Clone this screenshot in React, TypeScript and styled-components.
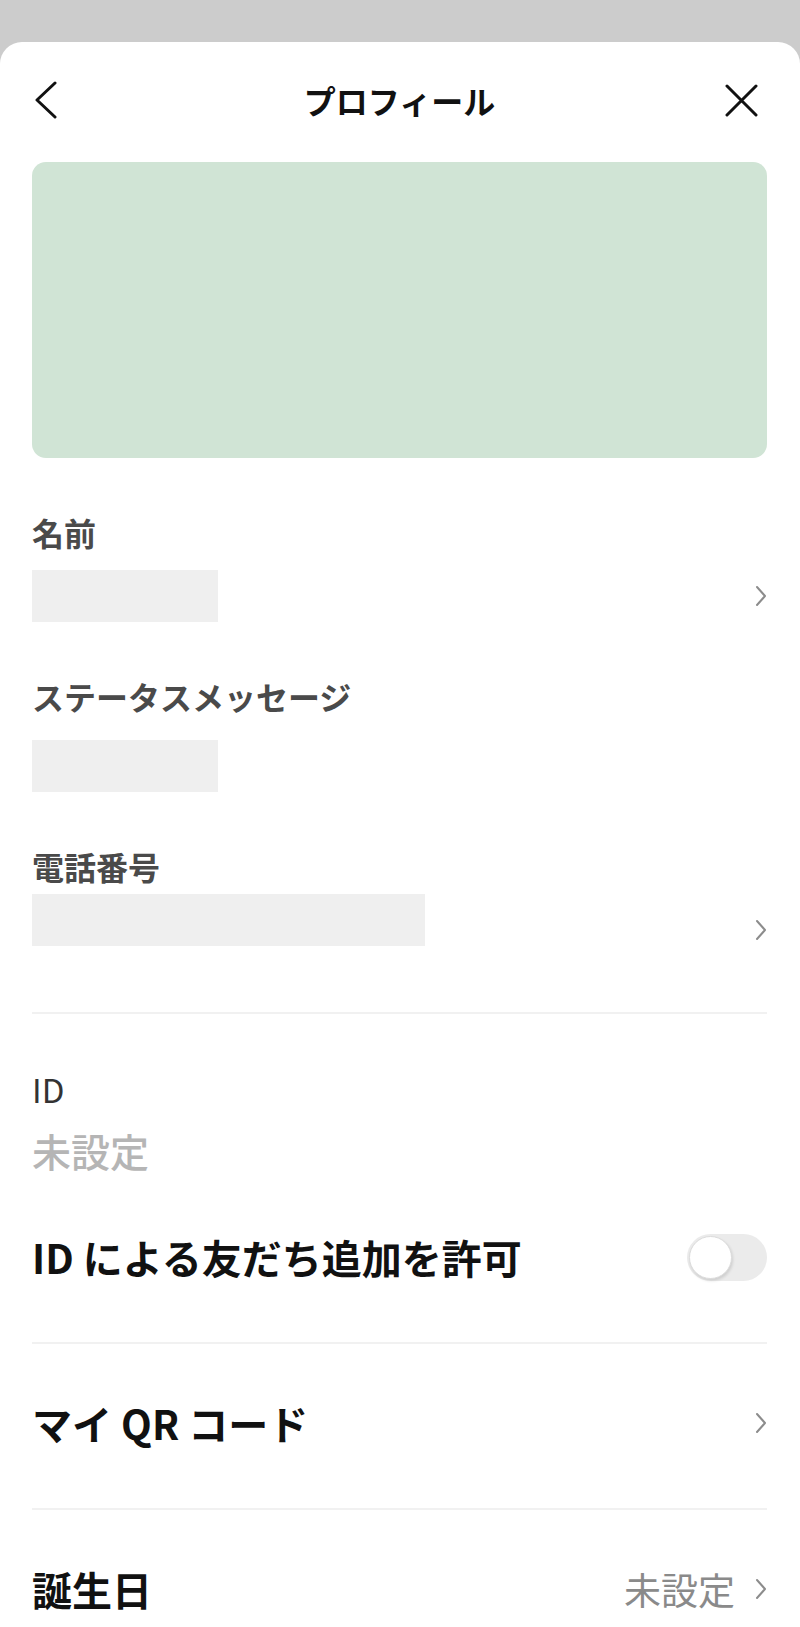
import styled, { createGlobalStyle } from "styled-components";

const GlobalStyle = createGlobalStyle`
  html, body {
    margin: 0;
    padding: 0;
    background: #cccccc;
    font-family: "Noto Sans CJK JP", "Noto Sans", sans-serif;
  }
`;

const Page = styled.div`
  padding-top: 42px;
`;

const Sheet = styled.div`
  background: #ffffff;
  border-radius: 22px 22px 0 0;
  min-height: 1585px;
  padding: 0 33px 0 32px;
  box-sizing: border-box;
`;

const Header = styled.header`
  display: grid;
  grid-template-columns: 1fr auto 1fr;
  align-items: center;
  height: 116px;
`;

const Title = styled.h1`
  margin: 0;
  font-size: 32px;
  font-weight: 700;
  line-height: 40px;
  color: #111111;
`;

const IconButton = styled.button<{ $align: "start" | "end" }>`
  display: flex;
  justify-self: ${(p) => p.$align};
  align-items: center;
  justify-content: center;
  background: none;
  border: 0;
  padding: 0;
  margin: ${(p) => (p.$align === "end" ? "0 9px 0 0" : "0 0 0 2px")};
  cursor: pointer;
`;

const Cover = styled.div`
  margin-top: 4px;
  height: 296px;
  background: #d0e4d5;
  border-radius: 14px;
`;

const FieldLabel = styled.div<{ $top: number }>`
  margin-top: ${(p) => p.$top}px;
  font-size: 32px;
  font-weight: 700;
  line-height: 36px;
  color: #4a4a4a;
`;

const ValueRow = styled.div<{ $top: number }>`
  margin-top: ${(p) => p.$top}px;
  display: flex;
  align-items: center;
  justify-content: space-between;
`;

const Placeholder = styled.div<{ $w: number }>`
  width: ${(p) => p.$w}px;
  height: 52px;
  background: #efefef;
`;

const ChevronSlot = styled.span<{ $shift?: number }>`
  display: flex;
  margin-top: ${(p) => (p.$shift ?? 0) * 2}px;
`;

const Divider = styled.hr<{ $top: number }>`
  margin: ${(p) => p.$top}px 0 0;
  border: 0;
  height: 2px;
  background: #f1f1f1;
`;

const IdLabel = styled.div<{ $top: number }>`
  margin-top: ${(p) => p.$top}px;
  font-size: 33px;
  font-weight: 400;
  line-height: 40px;
  color: #333333;
`;

const Unset = styled.div<{ $top: number }>`
  margin-top: ${(p) => p.$top}px;
  font-size: 39px;
  font-weight: 500;
  line-height: 46px;
  color: #b5b5b5;
`;

const ItemRow = styled.div<{ $top: number }>`
  margin-top: ${(p) => p.$top}px;
  display: flex;
  align-items: center;
  justify-content: space-between;
  height: 48px;
`;

const ItemText = styled.span`
  font-size: 40px;
  font-weight: 700;
  line-height: 48px;
  color: #111111;
`;

const Trail = styled.div`
  display: flex;
  align-items: center;
  gap: 20px;
`;

const TrailText = styled.span`
  font-size: 37px;
  line-height: 48px;
  color: #8a8a8a;
`;

const Toggle = styled.div<{ $on: boolean }>`
  position: relative;
  width: 80px;
  height: 47px;
  border-radius: 24px;
  background: ${(p) => (p.$on ? "#06c755" : "#ebebeb")};
  flex-shrink: 0;
`;

const Knob = styled.span<{ $on: boolean }>`
  position: absolute;
  top: 2px;
  left: ${(p) => (p.$on ? "35px" : "2px")};
  width: 43px;
  height: 43px;
  border-radius: 50%;
  background: #ffffff;
  box-sizing: border-box;
  border: 1px solid #dcdcdc;
  box-shadow: 1px 2px 3px rgba(0, 0, 0, 0.12);
`;

function Chevron({ shift }: { shift?: number }) {
  return (
    <ChevronSlot $shift={shift}>
      <svg width="12" height="22" viewBox="0 0 12 22" fill="none">
        <path d="M2 2 L10 11 L2 20" stroke="#8c8c8c" strokeWidth="2" strokeLinecap="round" strokeLinejoin="round" />
      </svg>
    </ChevronSlot>
  );
}

function BackIcon() {
  return (
    <svg width="24" height="38" viewBox="0 0 24 38" fill="none">
      <path d="M21 2 L3 19 L21 36" stroke="#111" strokeWidth="3" strokeLinecap="round" strokeLinejoin="round" />
    </svg>
  );
}

function CloseIcon() {
  return (
    <svg width="33" height="33" viewBox="0 0 33 33" fill="none">
      <path d="M2 2 L31 31 M31 2 L2 31" stroke="#111" strokeWidth="3" strokeLinecap="round" />
    </svg>
  );
}

export default function App() {
  return (
    <>
      <GlobalStyle />
      <Page>
        <Sheet>
          <Header>
            <IconButton $align="start" aria-label="戻る">
              <BackIcon />
            </IconButton>
            <Title>プロフィール</Title>
            <IconButton $align="end" aria-label="閉じる">
              <CloseIcon />
            </IconButton>
          </Header>

          <Cover />

          <FieldLabel $top={56}>名前</FieldLabel>
          <ValueRow $top={20}>
            <Placeholder $w={186} />
            <Chevron />
          </ValueRow>

          <FieldLabel $top={56}>ステータスメッセージ</FieldLabel>
          <ValueRow $top={26}>
            <Placeholder $w={186} />
          </ValueRow>

          <FieldLabel $top={56}>電話番号</FieldLabel>
          <ValueRow $top={10}>
            <Placeholder $w={393} />
            <Chevron shift={10} />
          </ValueRow>

          <Divider $top={66} />

          <IdLabel $top={55}>ID</IdLabel>
          <Unset $top={18}>未設定</Unset>

          <ItemRow $top={60}>
            <ItemText>ID による友だち追加を許可</ItemText>
            <Toggle $on={false}>
              <Knob $on={false} />
            </Toggle>
          </ItemRow>

          <Divider $top={61} />

          <ItemRow $top={55}>
            <ItemText>マイ QR コード</ItemText>
            <Chevron />
          </ItemRow>

          <Divider $top={61} />

          <ItemRow $top={55}>
            <ItemText>誕生日</ItemText>
            <Trail>
              <TrailText>未設定</TrailText>
              <Chevron />
            </Trail>
          </ItemRow>
        </Sheet>
      </Page>
    </>
  );
}
